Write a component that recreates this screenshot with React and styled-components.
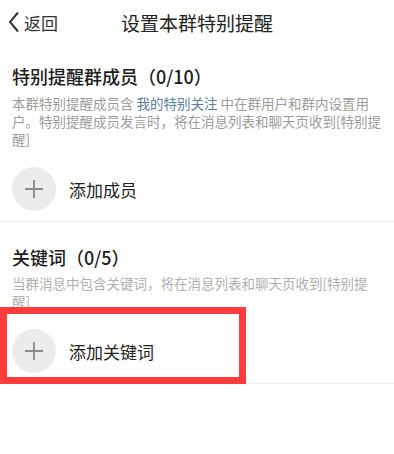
import React from "react";
import styled, { createGlobalStyle } from "styled-components";

const GlobalStyle = createGlobalStyle`
  html, body {
    margin: 0;
    padding: 0;
    background: #ffffff;
    font-family: "Noto Sans CJK SC", "Noto Sans", sans-serif;
    -webkit-font-smoothing: antialiased;
  }
`;

const Page = styled.div`
  width: 394px;
  min-height: 454px;
  background: #ffffff;
`;

const Header = styled.header`
  height: 44px;
  display: grid;
  grid-template-columns: 1fr auto 1fr;
  align-items: center;
`;

const BackButton = styled.div`
  display: flex;
  align-items: center;
  padding-left: 8px;
  color: #333333;
  font-size: 17px;
  gap: 4px;
`;

const Title = styled.div`
  font-size: 19px;
  color: #222222;
`;

const Section = styled.section`
  padding: 0 12px;
  border-bottom: 1px solid #eeeeee;
`;

const SectionTitle = styled.h2`
  margin: ${(p) => p.$top}px 0 0;
  font-size: 18px;
  font-weight: 500;
  line-height: 24px;
  color: #1c1c1c;
  text-spacing-trim: space-all;
`;

const Desc = styled.div`
  margin-top: ${(p) => p.$top}px;
  font-size: 13.5px;
  line-height: 18px;
  color: ${(p) => p.$color || "#a0a0a0"};
  text-spacing-trim: space-all;
`;

// each line of the hint text keeps the wrap of the original screen
const Line = styled.span`
  display: block;
  white-space: nowrap;
`;

const Link = styled.span`
  color: #5b7ea3;
`;

const AddRow = styled.div`
  position: relative;
  display: flex;
  align-items: center;
  gap: 13px;
  padding: 19px 0 10px;
`;

const PlusCircle = styled.div`
  width: 44px;
  height: 44px;
  border-radius: 50%;
  background: #ececec;
  display: flex;
  align-items: center;
  justify-content: center;
  flex-shrink: 0;
`;

const AddLabel = styled.span`
  font-size: 17px;
  color: #222222;
`;

// red annotation frame drawn over the keyword row
const Highlight = styled.div`
  position: absolute;
  top: -3px;
  left: -12px;
  width: 246px;
  height: 77px;
  box-sizing: border-box;
  border: 7px solid #ff3b3b;
  pointer-events: none;
`;

const Chevron = () => (
  <svg width="12" height="22" viewBox="0 0 12 22">
    <path d="M10 1.5 L2 11 L10 20.5" fill="none" stroke="#333" strokeWidth="2" />
  </svg>
);

const Plus = () => (
  <svg width="20" height="20" viewBox="0 0 20 20">
    <path d="M10 1 V19 M1 10 H19" stroke="#8a8a8a" strokeWidth="1.8" />
  </svg>
);

export default function App() {
  return (
    <Page>
      <GlobalStyle />
      <Header>
        <BackButton>
          <Chevron />
          <span>返回</span>
        </BackButton>
        <Title>设置本群特别提醒</Title>
        <div />
      </Header>

      <Section>
        <SectionTitle $top={20}>特别提醒群成员（0/10）</SectionTitle>
        <Desc $top={6} $color="#9c9c9c">
          <Line>
            本群特别提醒成员含 <Link>我的特别关注</Link> 中在群用户和群内设置用
          </Line>
          <Line>户。特别提醒成员发言时，将在消息列表和聊天页收到[特别提</Line>
          <Line>醒]</Line>
        </Desc>
        <AddRow>
          <PlusCircle>
            <Plus />
          </PlusCircle>
          <AddLabel>添加成员</AddLabel>
        </AddRow>
      </Section>

      <Section>
        <SectionTitle $top={23}>关键词（0/5）</SectionTitle>
        <Desc $top={5} $color="#b0b0b0">
          <Line>当群消息中包含关键词，将在消息列表和聊天页收到[特别提</Line>
          <Line>醒]</Line>
        </Desc>
        <AddRow>
          <PlusCircle>
            <Plus />
          </PlusCircle>
          <AddLabel>添加关键词</AddLabel>
          <Highlight />
        </AddRow>
      </Section>
    </Page>
  );
}
